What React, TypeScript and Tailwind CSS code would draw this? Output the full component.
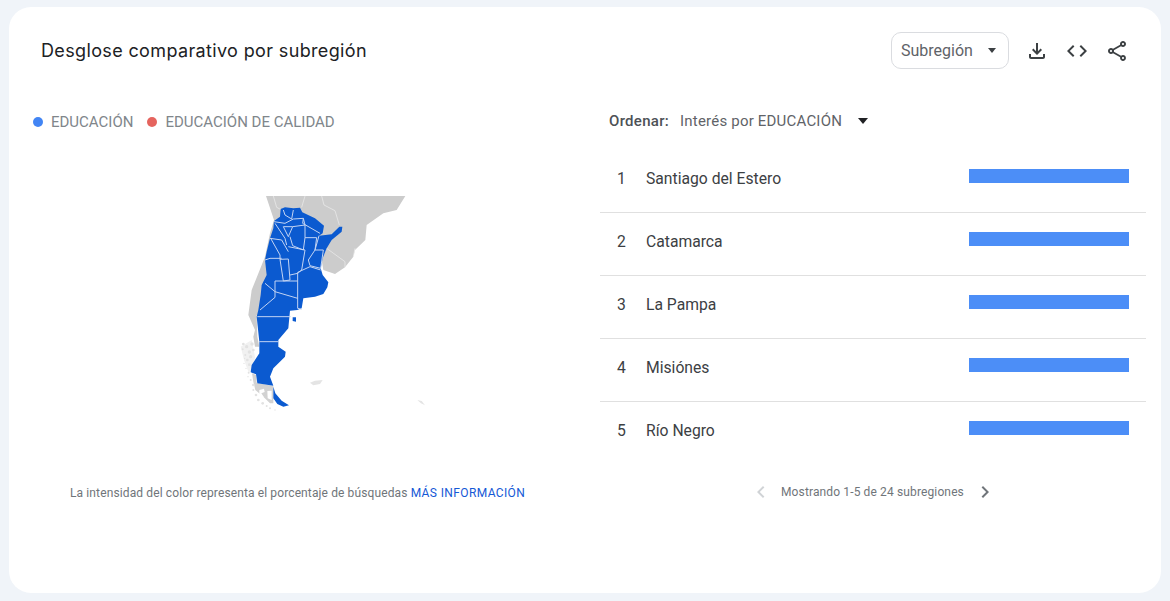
const rows = ["Santiago del Estero", "Catamarca", "La Pampa", "Misiónes", "Río Negro"];

// scattered islets of southern Chile
const islets = [
  [70, 462, 4], [80, 470, 5], [68, 478, 3], [88, 486, 5], [76, 495, 3], [92, 500, 5], [82, 510, 4], [72, 520, 2],
  [88, 524, 4], [78, 535, 2], [86, 548, 3], [96, 462, 5], [100, 480, 4], [92, 570, 3], [100, 585, 4], [108, 615, 4],
  [115, 630, 4], [128, 640, 4], [140, 648, 3], [150, 655, 3], [165, 660, 2], [100, 600, 3], [84, 560, 2], [74, 505, 2],
];

function ArgentinaMap() {
  return (
    <svg viewBox="0 0 660 675" className="h-[225px] w-[220px]">
      <path
        fill="#cccccc"
        d="M138 18L556 18L530 60L490 70L440 105L436 150L405 180L400 200L375 232L345 252L310 240L305 210L320 175L180 90L165 300L130 370L110 376L112 440L118 470L105 470L100 440L105 420L85 375L95 300L135 200L150 130L162 90Z"
      />
      <path fill="#f1f1f1" d="M62 470L95 450L105 500L100 545L85 545L72 510Z" />
      <path fill="#d2d2d2" d="M96 550L108 555L110 578L160 588L160 640L150 640L130 620L106 600L100 575Z" />
      <g fill="#e2e2e2">
        {islets.map(([x, y, r]) => (
          <circle key={`${x}-${y}`} cx={x} cy={y} r={r} />
        ))}
      </g>
      <path fill="#ffffff" d="M118 600L132 596L134 606L124 610L132 622L118 620ZM142 603L155 602L155 630L143 625Z" />
      <path fill="#e4e4e4" d="M270 578L285 572L308 570L300 582L280 586ZM592 630L605 633L615 646L603 640Z" />
      <g fill="none" stroke="#eeeeee" strokeWidth="2">
        <path d="M160 18L170 52L185 60M255 18L245 52M305 18L312 45L345 62L358 105M320 175L375 215L375 232M405 175L400 200" />
      </g>
      <path
        fill="#0b5ad0"
        d="M182 57L195 52L220 55L240 53L247 67L285 85L312 107L308 130L297 137L335 133L358 110L367 110L365 125L335 150L320 175L308 205L302 235L308 255L325 277L322 292L310 312L285 320L250 325L245 355L232 360L210 362L207 393L205 415L175 450L175 470L197 485L195 500L160 535L150 560L160 587L112 580L108 553L92 547L95 525L118 490L118 455L110 380L115 360L122 315L125 285L140 255L135 210L140 185L150 145L160 115L162 93L180 80Z"
      />
      <path fill="#0b5ad0" d="M218 382L228 382L228 395L218 393Z" />
      <path fill="#0b5ad0" d="M160 590L166 610L185 632L207 646L190 650L172 642L160 625Z" />
      <g fill="none" stroke="#c3d4f3" strokeWidth="3" strokeLinejoin="round">
        <path d="M190 60L195 75L215 87L220 60M162 95L195 100L220 87L250 85L255 105" />
        <path d="M250 85L248 100L300 130M255 143L290 143L285 180" />
        <path d="M218 110L255 105L255 143L250 180L218 167L210 140M190 110L218 110L205 140Z" />
        <path d="M165 100L195 145L200 165M150 145L185 150L205 185M135 210L150 205L185 205M152 145L180 195L180 208" />
        <path d="M180 208L205 207L210 270L190 273L180 208M205 170L255 180L245 240L233 250L210 255" />
        <path d="M285 180L310 180L302 235L270 227L265 210L285 180M297 137L285 180M233 247L270 230L302 240" />
        <path d="M233 247L233 355L245 358M165 273L233 273M165 273L165 305L233 325M135 280L165 305L165 322L120 360" />
        <path d="M112 380L212 380M118 455L175 455" />
      </g>
    </svg>
  );
}

export default function App() {
  return (
    <div className="h-[601px] bg-[#f0f4f9] pl-[9px] pt-[7px] font-['Roboto',sans-serif]">
      <div className="flex h-[586px] w-[1152px] flex-col rounded-[22px] bg-white">
        <header className="flex h-[87px] shrink-0 items-center pl-[32px] pr-[32px]">
          <h1 className="font-['Inter',sans-serif] text-[18px] font-normal tracking-[0.36px] text-[#202124]">
            Desglose comparativo por subregión
          </h1>
          <div className="ml-auto flex items-center">
            <button className="flex h-[37px] w-[118px] items-center rounded-[10px] border border-[#dadce0] pl-[9px] text-[16px] text-[#5f6368]">
              Subregión
              <span className="ml-[15px] h-0 w-0 border-x-[4.5px] border-t-[5px] border-x-transparent border-t-[#3c4043]" />
            </button>
            <svg viewBox="0 0 24 24" className="ml-[16px] h-[24px] w-[24px] fill-[#3c4043]">
              <path d="M18 15v3H6v-3H4v3c0 1.1.9 2 2 2h12c1.1 0 2-.9 2-2v-3h-2zm-1-4l-1.41-1.41L13 12.17V4h-2v8.17L8.41 9.59 7 11l5 5 5-5z" />
            </svg>
            <svg viewBox="0 0 24 24" className="ml-[16px] h-[24px] w-[24px] fill-[#3c4043]">
              <path d="M9.4 16.6L4.8 12l4.6-4.6L8 6l-6 6 6 6 1.4-1.4zm5.2 0l4.6-4.6-4.6-4.6L16 6l6 6-6 6-1.4-1.4z" />
            </svg>
            <svg viewBox="0 0 24 24" className="ml-[16px] h-[24px] w-[24px] fill-[#3c4043]">
              <path d="M18 16.08c-.76 0-1.44.3-1.96.77L8.91 12.7c.05-.23.09-.46.09-.7s-.04-.47-.09-.7l7.05-4.11c.54.5 1.25.81 2.04.81 1.66 0 3-1.34 3-3s-1.34-3-3-3-3 1.34-3 3c0 .24.04.47.09.7L8.04 9.81C7.5 9.31 6.79 9 6 9c-1.66 0-3 1.34-3 3s1.34 3 3 3c.79 0 1.5-.31 2.04-.81l7.12 4.16c-.05.21-.08.43-.08.65 0 1.61 1.31 2.92 2.92 2.92 1.61 0 2.92-1.31 2.92-2.92s-1.31-2.92-2.92-2.92zM18 4c.55 0 1 .45 1 1s-.45 1-1 1-1-.45-1-1 .45-1 1-1zM6 13c-.55 0-1-.45-1-1s.45-1 1-1 1 .45 1 1-.45 1-1 1zm12 7.02c-.55 0-1-.45-1-1s.45-1 1-1 1 .45 1 1-.45 1-1 1z" />
            </svg>
          </div>
        </header>

        <div className="flex">
          <section className="flex w-[591px] shrink-0 flex-col">
            <div className="flex h-[56px] items-center pl-[24px] text-[15px] text-[#80868b]">
              <span className="h-[10px] w-[10px] rounded-full bg-[#4285f4]" />
              <span className="ml-[8px]">EDUCACIÓN</span>
              <span className="ml-[14px] h-[10px] w-[10px] rounded-full bg-[#e5645e]" />
              <span className="ml-[8px]">EDUCACIÓN DE CALIDAD</span>
            </div>
            <div className="mt-[40px] pl-[211px]">
              <ArgentinaMap />
            </div>
            <p className="mt-[70px] pl-[61px] text-[12px] leading-[16px] tracking-[0.12px] text-[#70757a]">
              La intensidad del color representa el porcentaje de búsquedas{" "}
              <a className="tracking-[0.38px] text-[#1558d6]">MÁS INFORMACIÓN</a>
            </p>
          </section>

          <section className="flex w-[546px] shrink-0 flex-col">
            <div className="flex h-[56px] items-center pb-[2px] pl-[9px] text-[15px] text-[#5f6368]">
              <span className="font-medium tracking-[0.3px] text-[#4d5156]">Ordenar:</span>
              <span className="ml-[11px] tracking-[0.2px]">Interés por EDUCACIÓN</span>
              <span className="ml-[16px] h-0 w-0 border-x-[5.5px] border-t-[6px] border-x-transparent border-t-[#202124]" />
            </div>
            <ul>
              {rows.map((name, i) => (
                <li
                  key={name}
                  className="flex h-[63px] items-center border-b border-[#e0e0e0] pb-[5px] text-[15.7px] text-[#3c4043] last:border-b-0 last:pb-[6px]"
                >
                  <span className="w-[46px] pl-[17px]">{i + 1}</span>
                  <span>{name}</span>
                  <span className="mb-[5px] ml-auto mr-[17px] h-[14px] w-[160px] bg-[#4c8ef7]" />
                </li>
              ))}
            </ul>
            <div className="mt-[19px] flex h-[16px] items-center pl-[149px] text-[12px] tracking-[0.13px] text-[#70757a]">
              <svg viewBox="0 0 24 24" className="h-[24px] w-[24px] fill-[#d0d3d6]">
                <path d="M15.41 7.41L14 6l-6 6 6 6 1.41-1.41L10.83 12z" />
              </svg>
              <span className="ml-[8px]">Mostrando 1-5 de 24 subregiones</span>
              <svg viewBox="0 0 24 24" className="ml-[9px] h-[24px] w-[24px] fill-[#70757a]">
                <path d="M8.59 16.59L10 18l6-6-6-6-1.41 1.41L13.17 12z" />
              </svg>
            </div>
          </section>
        </div>
      </div>
    </div>
  );
}
